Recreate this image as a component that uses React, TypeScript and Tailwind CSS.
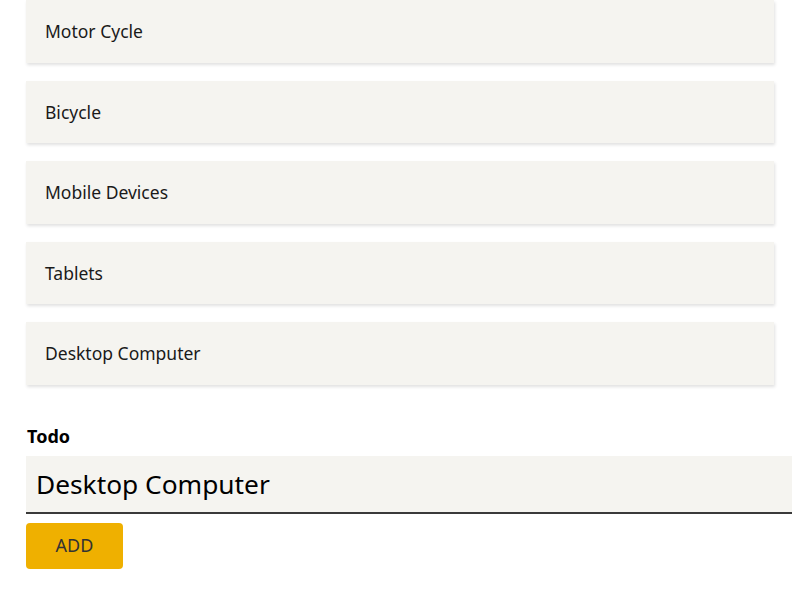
const items = ["Motor Cycle", "Bicycle", "Mobile Devices", "Tablets", "Desktop Computer"];

export default function App() {
  return (
    <div className="min-h-[600px] bg-white font-['Noto_Sans',sans-serif] text-[#1a1a1a]">
      <ul className="ml-[26px] w-[748px]">
        {items.map((item) => (
          <li
            key={item}
            className="mb-[18px] flex h-[62.5px] items-center bg-[#f5f4f0] pl-[19px] text-[17.5px] shadow-[1px_2px_3px_rgba(0,0,0,0.12)]"
          >
            {item}
          </li>
        ))}
      </ul>
      <form className="ml-[26px] mt-[40px] flex flex-col" onSubmit={(e) => e.preventDefault()}>
        <label className="mb-[9px] ml-[1px] text-[18px] font-bold leading-[22px] text-black">Todo</label>
        <input
          type="text"
          defaultValue="Desktop Computer"
          className="h-[58px] w-[766px] border-b-2 border-[#3a3a3a] bg-[#f5f4f0] px-[10px] text-[26.3px] text-black outline-none"
        />
        <button
          type="submit"
          className="mt-[9px] h-[46px] w-[97px] rounded-[4px] bg-[#efb000] text-[18px] text-[#333]"
        >
          ADD
        </button>
      </form>
    </div>
  );
}
